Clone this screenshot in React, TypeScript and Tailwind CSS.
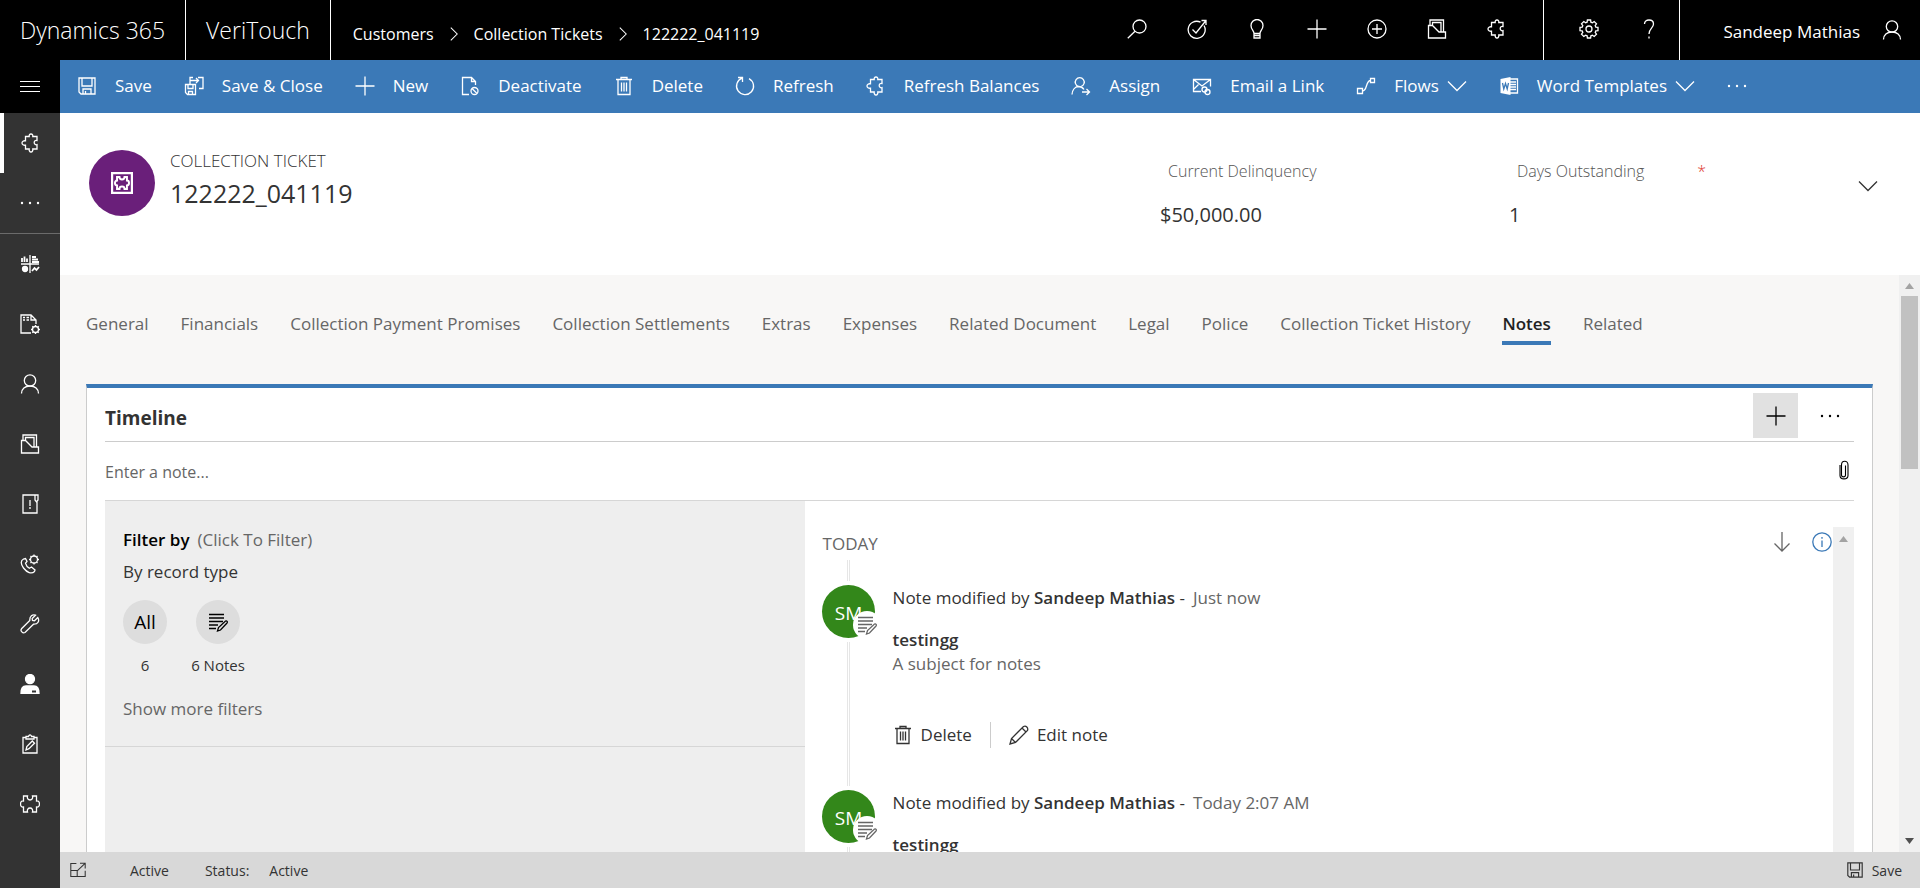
import React from 'react';

type IconName =
  | 'puzzle' | 'puzzleFull' | 'save' | 'saveClose' | 'plus' | 'deactivate' | 'trash' | 'refresh' | 'assign'
  | 'mail' | 'flow' | 'word' | 'search' | 'target' | 'bulb' | 'circlePlus' | 'folder' | 'gear' | 'help'
  | 'person' | 'dashboard' | 'docGear' | 'alertDoc' | 'phoneGear' | 'wrench' | 'agent' | 'clipboard'
  | 'dots' | 'menu' | 'down' | 'right' | 'note' | 'pencil' | 'clip' | 'arrowDown' | 'info' | 'popout' | 'ticket';

const PUZZLE =
  'M7 3.5h1.2C8 2 8.700 1 10 1s2 1 1.800 2.500H16v4c-1.600-.4-2.800.4-2.800 2s1.200 2.600 2.800 2.200V16h-4.200c.2 1.700-.5 3-1.800 3s-2-1.300-1.800-3H4.500v-3.800C2.500 12.500 1 11.500 1 10s1.500-2.500 3.500-2.200V3.500z';
const GEAR =
  'M8.400 1h3.200l.3 2.200 1.500.6 1.800-1.300 2.300 2.300-1.300 1.800.6 1.500 2.200.3v3.200l-2.200.3-.6 1.500 1.300 1.800-2.300 2.300-1.800-1.300-1.500.6-.3 2.200H8.400l-.3-2.200-1.500-.6-1.800 1.300-2.300-2.300 1.300-1.800-.6-1.500L1 11.600V8.400l2.200-.3.6-1.500-1.300-1.800 2.300-2.300 1.800 1.300 1.500-.6z';

const icons: Record<IconName, React.ReactNode> = {
  puzzle: <path d={PUZZLE} />,
  puzzleFull: (
    <path d="M3.500 2h4c-.6 2.500.6 4 2.500 4s3.100-1.500 2.500-4h4v5c2-.3 3 1 3 3s-1 3.300-3 3v5h-4c.6-2.500-.6-4-2.500-4s-3.100 1.500-2.500 4h-4v-5c-2 .3-3-1-3-3s1-3.300 3-3z" />
  ),
  save: <path d="M2 2h16v16H4l-2-2zM5 2v8h10V2M6 18v-5h8v5M8.500 15v3" />,
  saveClose: <path d="M1.500 8.500h10v10h-8l-2-2zM4 8.500v4h5v-4M4.500 18.500v-3h4v3M6 6V1.500h3M14 1.500h5v11h-4M6 8V4.500h8.500M12 2l2.500 2.500L12 7" />,
  plus: <path d="M10 0.500v19M0.500 10h19" />,
  deactivate: (
    <>
      <path d="M9 18.500H2.500v-17h9l4 4V9M11.500 1.500v4h4" />
      <circle cx="14.500" cy="15" r="3.500" />
      <path d="M12 12.500l5 5" />
    </>
  ),
  trash: <path d="M2 3.500h16M7 3.500v-2h6v2M4 3.500v15h12v-15M7.500 6.500v9M10 6.500v9M12.500 6.500v9" />,
  refresh: <path d="M7 2.200a8.500 8.500 0 1 0 7 .4M3 1.500h4.500V6" />,
  assign: <path d="M10 10.500a4.500 4.500 0 1 0-2.500 0M1 18.500c.3-4.500 3-7.800 6.500-8 2.500 0 4.500 1.500 5.500 3M11 16h7.500M15.500 13l3 3-3 3" />,
  mail: (
    <>
      <path d="M9 15.500H1.500v-12h17v7M1.500 3.500l8.500 6.500 8.500-6.500M1.500 13.500l5-5" />
      <circle cx="12.500" cy="13.500" r="2.500" />
      <circle cx="15.500" cy="16" r="2.500" />
    </>
  ),
  flow: <path d="M1.500 12.500h5v5h-5zM14.500 2.500h4v4h-4zM6.500 15c5 0 3-10.500 8-10.500" />,
  word: (
    <>
      <path d="M10 3h8.500v14H10M11 6h6M11 8.500h6M11 11h6M11 13.500h6" />
      <path d="M1.500 3L11.500 1v18l-10-2z" fill="currentColor" stroke="none" />
      <path d="M3.500 7l1.300 6L6.500 7.500 8.200 13 9.500 7" stroke="#3b79b7" />
    </>
  ),
  search: (
    <>
      <circle cx="12.500" cy="7.500" r="6.500" />
      <path d="M8 12.200L0.800 19.300" />
    </>
  ),
  target: <path d="M13.500 3.200A8.500 8.500 0 1 0 17 6.500M5.500 10.500l3.500 3.500L19 1.500M14.500 1.500H19V6" />,
  bulb: <path d="M7 14.500c0-3-3-4-3-8A6 6 0 0 1 16 6.500c0 4-3 5-3 8zM7 14.500v4.500h6v-4.500M7 16.500h6" />,
  circlePlus: (
    <>
      <circle cx="10" cy="10" r="9" />
      <path d="M10 5v10M5 10h10" />
    </>
  ),
  folder: <path d="M1.500 6.500h4l6.500 6.500h6.500v6h-17zM3 6.500V1h13.500v12M5.500 6.500v-3H14V13" />,
  gear: (
    <>
      <path d={GEAR} />
      <circle cx="10" cy="10" r="3" />
    </>
  ),
  help: (
    <>
      <path d="M5.500 5C5.500 2.500 7.500 1 10 1s4.500 1.600 4.500 4c0 4-4.500 4.500-4.500 10" />
      <path d="M10 17.500v2" />
    </>
  ),
  person: (
    <>
      <circle cx="10" cy="6.500" r="5.700" />
      <path d="M1.500 19.500c0-4.500 3.500-7.500 8.500-7.500s8.500 3 8.500 7.500" />
    </>
  ),
  dashboard: (
    <>
      <path d="M10 1v18M1 10h18" />
      <path d="M2 4v4M4.500 2.500V8M7 4.500V8M12 3h4M12 5.500h6M12 8h7" strokeWidth="1.800" />
      <circle cx="5" cy="15" r="2.500" fill="currentColor" />
      <path d="M12 17l2.500-3 2 2L19 13" strokeWidth="1.800" />
    </>
  ),
  docGear: (
    <>
      <path d="M11 19H1V1h10l5 5v4M11 1v5h5M3 3.500h2M6.500 3.500H9M3 6h2M6.500 6H9" />
      <circle cx="15.500" cy="15.500" r="3" />
      <path d="M15.500 11v1.500M15.500 18.500V20M11 15.500h1.500M18.500 15.500H20M12.300 12.300l1 1M17.700 17.700l1 1M12.300 18.700l1-1M17.700 13.300l1-1" />
    </>
  ),
  alertDoc: <path d="M17 7v12H3V1h14M10 6v6M10 13v2M15 1v5l1.500 2L18 6V1z" />,
  phoneGear: (
    <>
      <path d="M3.500 5C.5 6.500.5 10 3.500 14c3.500 4.500 8 6.500 11 3.500l.5-1.500-3.500-3-2.200 1.200c-2-1-3.300-3-3.800-5L7 7.500 5.500 4.500z" />
      <circle cx="14" cy="5.500" r="3.500" />
      <path d="M14 .5V2M14 9v1.500M9 5.500h1.500M17.500 5.500H19M10.500 2l1 1M16.500 8l1 1M10.500 9l1-1M16.500 3l1-1" />
    </>
  ),
  wrench: <path d="M17.800 3.500L14.500 6.800l-2-.3-.3-2 3.300-3.300C12.500 0 9.500 2 9.800 6.500L1.500 14.800c-1.500 2 1.200 5 3.500 3.700l8.500-8.300c4.500.3 6.300-3.200 4.300-6.700z" />,
  agent: (
    <>
      <circle cx="10" cy="5" r="4.500" fill="currentColor" />
      <path d="M1 19.500c0-5 1-7.500 5-7.500h8c4 0 5 2.500 5 7.500z" fill="currentColor" />
      <path d="M12 17.500h4" stroke="#333333" strokeWidth="2" />
    </>
  ),
  clipboard: <path d="M6 3.500H3V19h14V3.500h-3M6 5h8V2.500h-2.500c0-2-3-2-3 0H6zM6 16l.8-3.500 5.500-5.500 2.200 2.200-5.500 5.500z" />,
  dots: (
    <g fill="currentColor" stroke="none">
      <circle cx="2" cy="10" r="1.200" />
      <circle cx="10" cy="10" r="1.200" />
      <circle cx="18" cy="10" r="1.200" />
    </g>
  ),
  menu: <path d="M0 4.500h20M0 9.500h20M0 14.500h20" strokeWidth="1" />,
  down: <path d="M1 5.500l9 9 9-9" />,
  right: <path d="M6 2l8 8-8 8" />,
  note: (
    <>
      <path d="M1 2.500h15M1 6h15M1 9.500h14M1 13h9M1 16.500h7" />
      <path d="M9.500 19l1-3.500 7-6.500c1.500-.5 2.300 1 1.500 2l-6.500 7z" />
    </>
  ),
  pencil: <path d="M1 19l1.500-5.500L14.500 1.500c2.500-1.500 5 1.500 4 4L6.500 17.500zM2.500 13.500l4 4M13 3l4 4" />,
  clip: <path d="M6 5v10.500c0 4.500 8 4.500 8 0V5c0-5-6.500-5-6.500 0v10c0 2.500 4 2.500 4 0V5.500" strokeWidth="1.100" />,
  arrowDown: <path d="M10 0v19M2.500 11.500L10 19l7.500-7.500" />,
  info: (
    <>
      <circle cx="10" cy="10" r="9.200" />
      <path d="M10 8.500V15M10 5v1.800" />
    </>
  ),
  popout: <path d="M8 2H1v16h18v-7M1 10.500h8V18M9 11l9.500-9M12.500 1.500H19V8" />,
  ticket: (
    <>
      <path d="M1 1h18v18H1z" strokeWidth="2" />
      <path
        d="M5.500 4.500h2.200c0 3 4.600 3 4.600 0h2.200v3.300c2.500 0 2.500 4.400 0 4.400v3.300h-2.200c0-3-4.600-3-4.600 0H5.500v-3.300c-2.500 0-2.500-4.400 0-4.400z"
        strokeWidth="1.800"
      />
    </>
  ),
};

function Icon({ name, className = 'size-5' }: { name: IconName; className?: string }) {
  return (
    <svg
      viewBox="0 0 20 20"
      className={`${className} shrink-0`}
      fill="none"
      stroke="currentColor"
      strokeWidth="1.300"
      aria-hidden="true"
    >
      {icons[name]}
    </svg>
  );
}

const topActions: [IconName, string][] = [
  ['search', 'Search'],
  ['target', 'Task flow'],
  ['bulb', 'Assistant'],
  ['plus', 'Quick create'],
  ['circlePlus', 'Advanced find'],
  ['folder', 'Records'],
  ['puzzle', 'Extensions'],
];

const commands: { icon: IconName; label: string; menu?: boolean }[] = [
  { icon: 'save', label: 'Save' },
  { icon: 'saveClose', label: 'Save & Close' },
  { icon: 'plus', label: 'New' },
  { icon: 'deactivate', label: 'Deactivate' },
  { icon: 'trash', label: 'Delete' },
  { icon: 'refresh', label: 'Refresh' },
  { icon: 'puzzle', label: 'Refresh Balances' },
  { icon: 'assign', label: 'Assign' },
  { icon: 'mail', label: 'Email a Link' },
  { icon: 'flow', label: 'Flows', menu: true },
  { icon: 'word', label: 'Word Templates', menu: true },
];

const sideItems: [IconName, string][] = [
  ['dashboard', 'Dashboards'],
  ['docGear', 'Templates'],
  ['person', 'Customers'],
  ['folder', 'Files'],
  ['alertDoc', 'Alerts'],
  ['phoneGear', 'Calls'],
  ['wrench', 'Service'],
  ['agent', 'Agents'],
  ['clipboard', 'Tasks'],
  ['puzzleFull', 'Add-ins'],
];

const tabs = [
  'General',
  'Financials',
  'Collection Payment Promises',
  'Collection Settlements',
  'Extras',
  'Expenses',
  'Related Document',
  'Legal',
  'Police',
  'Collection Ticket History',
  'Notes',
  'Related',
];

const notes = ['Just now', 'Today 2:07 AM'];

function TopBar() {
  return (
    <header className="flex h-[60px] shrink-0 bg-black text-white">
      <div className="flex items-center border-r border-white px-5 text-[23px] font-light">Dynamics 365</div>
      <div className="flex items-center border-r border-white px-5 text-[23px] font-light">VeriTouch</div>
      <nav aria-label="Breadcrumb" className="flex items-center gap-3 pt-2 pl-[22px] text-[16px]">
        <a href="#customers">Customers</a>
        <Icon name="right" className="size-4" />
        <a href="#tickets">Collection Tickets</a>
        <Icon name="right" className="size-4" />
        <a href="#ticket">122222_041119</a>
      </nav>
      <div className="ml-auto flex pb-[2px]">
        {topActions.map(([icon, label]) => (
          <button key={label} aria-label={label} className="flex w-[60px] items-center justify-center">
            <Icon name={icon} />
          </button>
        ))}
      </div>
      <div className="ml-4 flex border-x border-white pl-[15px]">
        <button aria-label="Settings" className="flex w-[60px] items-center justify-center pb-[2px]">
          <Icon name="gear" />
        </button>
        <button aria-label="Help" className="flex w-[60px] items-center justify-center pb-[2px]">
          <Icon name="help" />
        </button>
      </div>
      <button className="flex w-[240px] items-center justify-end gap-[22px] pr-[18px] text-[17px]">
        <span className="pt-1">Sandeep Mathias</span>
        <Icon name="person" />
      </button>
    </header>
  );
}

function SideBar() {
  return (
    <nav aria-label="Site map" className="flex w-[60px] shrink-0 flex-col bg-[#333333] text-white">
      <button aria-label="Open menu" className="flex h-[53px] shrink-0 items-center justify-center bg-black">
        <Icon name="menu" />
      </button>
      <button
        aria-label="Extensions"
        className="flex h-[60px] shrink-0 items-center justify-center border-l-4 border-white pr-[2px]"
      >
        <Icon name="puzzle" />
      </button>
      <button
        aria-label="More"
        className="flex h-[61px] shrink-0 items-center justify-center border-b border-[#6b6b6b]"
      >
        <Icon name="dots" />
      </button>
      {sideItems.map(([icon, label]) => (
        <button key={label} aria-label={label} className="flex h-[60px] shrink-0 items-center justify-center">
          <Icon name={icon} />
        </button>
      ))}
    </nav>
  );
}

function CommandBar() {
  return (
    <div className="flex h-[53px] shrink-0 items-center gap-8 bg-[#3b79b7] px-[17px] pb-[2px] text-[17px] whitespace-nowrap text-white">
      {commands.map((c) => (
        <button key={c.label} className="flex items-center gap-[18px]">
          <Icon name={c.icon} />
          <span className="flex items-center gap-2">
            {c.label}
            {c.menu && <Icon name="down" />}
          </span>
        </button>
      ))}
      <button aria-label="More commands">
        <Icon name="dots" />
      </button>
    </div>
  );
}

function RecordHeader() {
  return (
    <section className="flex h-[162px] shrink-0 bg-white pr-[42px] pl-[29px] text-[#333333]">
      <div className="mt-[37px] flex size-[66px] items-center justify-center rounded-full bg-[#6a1f7a] text-white">
        <Icon name="ticket" className="size-[22px]" />
      </div>
      <div className="mt-9 ml-[15px]">
        <p className="text-[17px] leading-6 font-light">COLLECTION TICKET</p>
        <h1 className="text-[25px] leading-10">122222_041119</h1>
      </div>
      <dl className="ml-auto flex">
        <div className="w-[349px]">
          <dt className="mt-[46px] pl-2 text-[16px] leading-6 font-light text-[#555555]">Current Delinquency</dt>
          <dd className="mt-4 text-[20px] leading-8">$50,000.00</dd>
        </div>
        <div className="w-[349px]">
          <dt className="mt-[46px] flex justify-between pr-[152px] pl-2 text-[16px] leading-6 font-light text-[#555555]">
            Days Outstanding
            <span className="text-[#e03c31]">*</span>
          </dt>
          <dd className="mt-4 text-[20px] leading-8">1</dd>
        </div>
      </dl>
      <button aria-label="Expand header" className="h-[146px]">
        <Icon name="down" />
      </button>
    </section>
  );
}

function Timeline() {
  return (
    <section className="flex min-h-0 grow flex-col border-x border-t-4 border-x-[#cccccc] border-t-[#3b79b7] bg-white px-[18px]">
      <div className="flex h-[54px] shrink-0 items-center border-b border-[#cccccc] pt-[2px]">
        <h2 className="pt-1.5 text-[19px] font-bold text-[#333333]">Timeline</h2>
        <button aria-label="Add record" className="ml-auto flex size-[45px] items-center justify-center bg-[#e1e1e1]">
          <Icon name="plus" />
        </button>
        <button aria-label="More timeline commands" className="mr-[14px] ml-[22px]">
          <Icon name="dots" />
        </button>
      </div>
      <div className="flex h-[59px] shrink-0 items-center border-b border-[#d6d6d6]">
        <input
          type="text"
          aria-label="Enter a note"
          placeholder="Enter a note..."
          className="min-w-0 grow pt-[2px] text-[16px] text-[#333333] outline-none placeholder:text-[#666666]"
        />
        <button aria-label="Attach file" className="pb-[2px]">
          <Icon name="clip" />
        </button>
      </div>
      <div className="flex min-h-0 grow">
        <div className="w-2/5 bg-[#eeeeee]">
          <div className="h-[246px] border-b border-[#d6d6d6] px-[18px] pt-[27px] text-[17px] text-[#333333]">
            <p className="leading-6">
              <span className="font-semibold text-black">Filter by</span>
              <span className="ml-2 text-[#666666]">(Click To Filter)</span>
            </p>
            <p className="mt-2 leading-6">By record type</p>
            <div className="mt-4 flex gap-[15px] text-[15px]">
              <button className="flex w-11 flex-col items-center gap-[10px]">
                <span className="flex size-11 items-center justify-center rounded-full bg-[#dddddd] text-[19px] text-black">
                  All
                </span>
                6
              </button>
              <button className="flex w-[72px] flex-col items-center gap-[10px] whitespace-nowrap">
                <span className="flex size-11 items-center justify-center rounded-full bg-[#dddddd] text-black">
                  <Icon name="note" />
                </span>
                6 Notes
              </button>
            </div>
            <a href="#filters" className="mt-5 block leading-6 text-[#666666]">
              Show more filters
            </a>
          </div>
        </div>
        <div className="min-w-0 grow overflow-hidden pl-[18px]">
          <div className="mt-[30px] flex h-[26px] items-center text-[17px] text-[#666666]">
            TODAY
            <button aria-label="Sort order" className="mb-1 ml-auto">
              <Icon name="arrowDown" />
            </button>
            <button aria-label="Information" className="mr-[1px] mb-1 ml-5 text-[#3b79b7]">
              <Icon name="info" />
            </button>
          </div>
          <ul className="mt-[3px]">
            {notes.map((time) => (
              <li key={time} className="flex gap-[18px]">
                <div className="flex w-[52px] flex-col items-center">
                  <div className="h-[21px] w-[3px] border-x border-[#e6e6e6]" />
                  <div className="relative my-1 flex size-[53px] items-center justify-center rounded-full bg-[#33871a] pt-1 text-[19px] text-white">
                    SM
                    <span className="absolute -right-1.5 -bottom-[1px] flex size-7 items-center justify-center rounded-full bg-white text-[#666666]">
                      <Icon name="note" />
                    </span>
                  </div>
                  <div className="w-[3px] grow border-x border-[#e6e6e6]" />
                </div>
                <div className="h-[205px] pt-[26px] text-[17px] text-[#333333]">
                  <p className="leading-6">
                    Note modified by <span className="font-semibold">Sandeep Mathias</span> -
                    <span className="ml-2 text-[#666666]">{time}</span>
                  </p>
                  <p className="mt-[18px] leading-6 font-semibold">testingg</p>
                  <p className="leading-6 text-[#666666]">A subject for notes</p>
                  <div className="mt-[46px] flex h-[26px] items-center">
                    <button className="flex items-center gap-2 border-r border-[#cccccc] pr-[18px]">
                      <Icon name="trash" />
                      Delete
                    </button>
                    <button className="flex items-center gap-2 pl-[18px]">
                      <Icon name="pencil" />
                      Edit note
                    </button>
                  </div>
                </div>
              </li>
            ))}
          </ul>
        </div>
        <div className="mt-[26px] flex w-[21px] justify-center bg-[#f0f0f0] pt-[9px]">
          <svg viewBox="0 0 9 6" className="h-[6px] w-[9px]" aria-hidden="true">
            <path d="M0 6L4.500 0 9 6z" fill="#a3a3a3" />
          </svg>
        </div>
      </div>
    </section>
  );
}

export default function App() {
  return (
    <div className="flex h-screen flex-col overflow-hidden font-['Open_Sans','Noto_Sans',sans-serif]">
      <TopBar />
      <div className="flex min-h-0 grow">
        <SideBar />
        <div className="flex min-w-0 grow flex-col">
          <CommandBar />
          <RecordHeader />
          <main className="flex min-h-0 grow bg-[#f8f7f6]">
            <div className="flex min-w-0 grow flex-col px-[26px]">
              <div className="flex h-[109px] shrink-0 items-start gap-8 pt-8 text-[17px] whitespace-nowrap text-[#666666]">
                {tabs.map((tab) => (
                  <button
                    key={tab}
                    className={
                      tab === 'Notes'
                        ? 'h-[38px] border-b-4 border-[#3b79b7] font-semibold text-[#222222]'
                        : 'h-[38px] border-b-4 border-transparent'
                    }
                  >
                    {tab}
                  </button>
                ))}
              </div>
              <Timeline />
            </div>
            <div className="flex w-[21px] flex-col items-center bg-[#f0f0f0] pt-2 pb-2">
              <svg viewBox="0 0 9 6" className="h-[6px] w-[9px]" aria-hidden="true">
                <path d="M0 6L4.500 0 9 6z" fill="#a3a3a3" />
              </svg>
              <div className="mt-[7px] h-[173px] w-[17px] bg-[#c1c1c1]" />
              <svg viewBox="0 0 9 6" className="mt-auto h-[6px] w-[9px]" aria-hidden="true">
                <path d="M0 0l4.500 6L9 0z" fill="#505050" />
              </svg>
            </div>
          </main>
          <footer className="flex h-9 shrink-0 items-center bg-[#d8d8d8] pr-[18px] pl-[10px] text-[14px] text-[#333333]">
            <button aria-label="Open in new window">
              <Icon name="popout" className="size-4" />
            </button>
            <span className="ml-11">Active</span>
            <span className="ml-9">Status:</span>
            <span className="ml-5">Active</span>
            <button className="ml-auto flex items-center gap-2">
              <Icon name="save" className="size-[18px]" />
              Save
            </button>
          </footer>
        </div>
      </div>
    </div>
  );
}
